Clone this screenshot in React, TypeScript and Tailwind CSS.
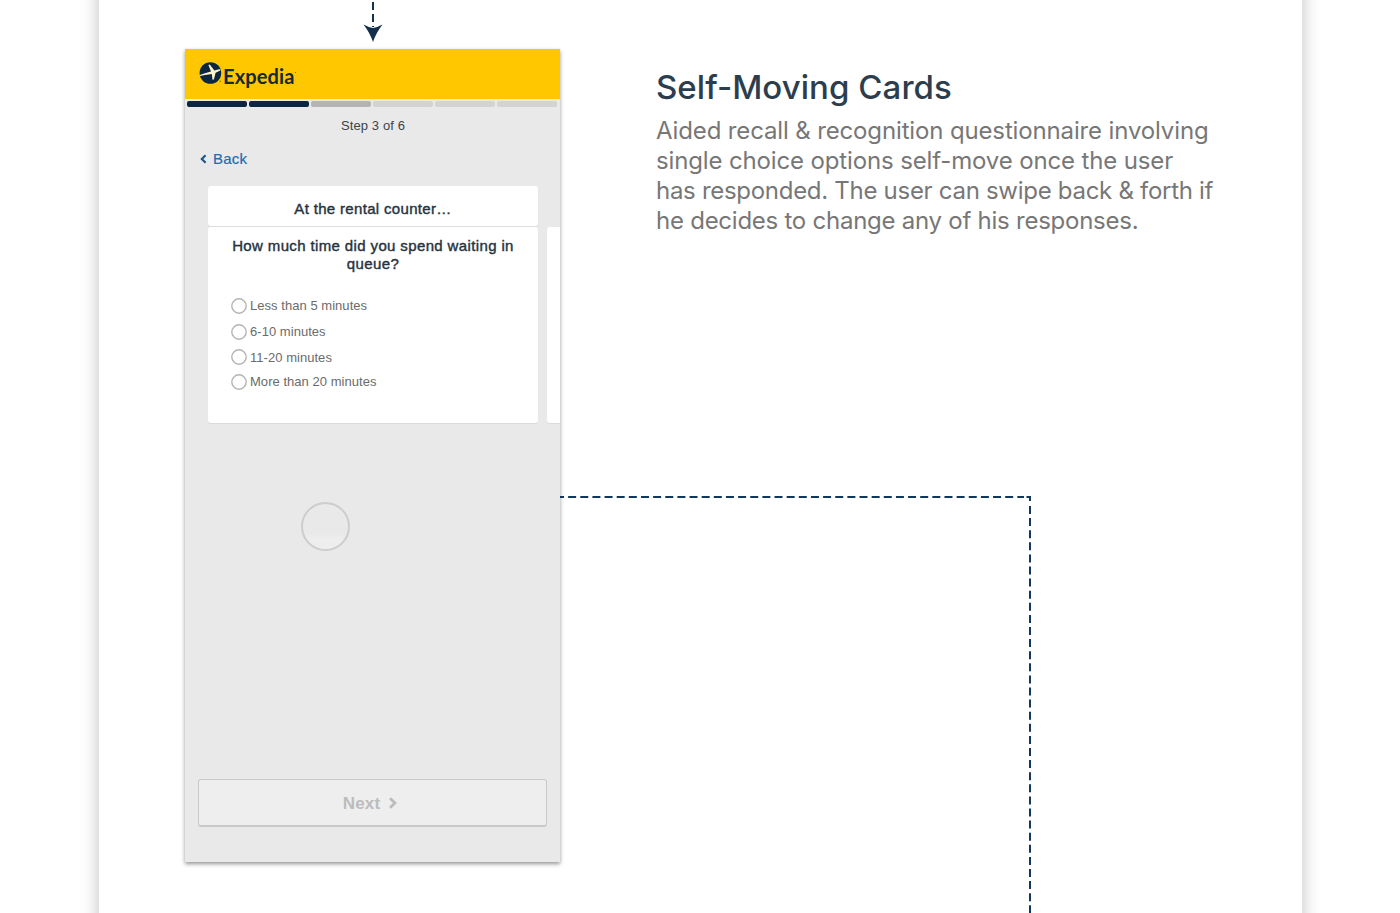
import React from 'react';

const STEPS = ['bg-[#0b2640]', 'bg-[#0b2640]', 'bg-[#b4b4b4]', 'bg-[#d3d3d3]', 'bg-[#d3d3d3]', 'bg-[#d3d3d3]'];

const OPTIONS = [
  { label: 'Less than 5 minutes', height: 'h-[26px]' },
  { label: '6-10 minutes', height: 'h-[26px]' },
  { label: '11-20 minutes', height: 'h-[25px]' },
  { label: 'More than 20 minutes', height: 'h-[24px]' },
];

const SUMMARY = [
  { text: 'Aided recall & recognition questionnaire involving', tracking: 'tracking-[-0.14px]' },
  { text: 'single choice options self-move once the user', tracking: 'tracking-[-0.14px]' },
  { text: 'has responded. The user can swipe back & forth if', tracking: 'tracking-[-0.29px]' },
  { text: 'he decides to change any of his responses.', tracking: 'tracking-[-0.25px]' },
];

function Logo() {
  return (
    <div className="flex items-start">
      <svg width="24" height="24" viewBox="0 0 24 24" className="shrink-0">
        <circle cx="11.4" cy="12" r="10.8" fill="#0b2640" />
        <path
          d="M0.8 13.9 L6 12.2 L12 10.6 L9.4 4 L10.7 3.5 L15.4 9.5 L20 8.3 C21.8 8 22 9.2 20.8 9.8 L16.6 11.8 L14.9 18.6 L13.5 18.8 L12.8 13 L6 14 L0.9 14.9 Z"
          fill="#fff3cc"
        />
        <circle cx="21.2" cy="20.3" r="0.7" fill="#7d6a15" />
      </svg>
      <span className="mt-[2.500px] font-['Lato'] text-[20px] leading-6 font-bold tracking-[0.15px] text-[#14293a]">Expedia</span>
      <span className="mt-[11px] size-px bg-[#7d6a15]" />
    </div>
  );
}

function Phone() {
  return (
    <section className="flex h-[813px] w-[375px] shrink-0 flex-col overflow-hidden bg-[#e9e9e9] font-['Liberation_Sans',sans-serif]">
      <header className="h-[50px] shrink-0 bg-[#ffc700] pt-[12px] pl-[14px]">
        <Logo />
      </header>
      <div className="mt-[2px] flex gap-[2px] pl-[2px]">
        {STEPS.map((color, i) => (
          <span key={i} className={`h-[6px] w-[60px] rounded-[2px] ${color}`} />
        ))}
      </div>
      <p className="mt-[10px] pl-px text-center text-[13px] leading-[18px] tracking-[0.1px] text-[#3a444c]">Step 3 of 6</p>
      <a className="mt-[14px] flex h-5 items-center pl-[14px] text-[15px] tracking-[0.2px] text-[#1f6cb0] [-webkit-text-stroke:0.2px_#1f6cb0]">
        <svg width="9" height="10" viewBox="0 0 9 10" className="mr-[5px]">
          <path d="M6.6 1.3 L2.8 5 L6.6 8.7" fill="none" stroke="#1d5488" strokeWidth="2.1" />
        </svg>
        Back
      </a>
      <div className="mt-[17px] flex w-[500px] items-end gap-[9px] pl-[23px]">
        <div className="flex w-[330px] flex-col gap-px text-[#26333e]">
          <h2 className="h-10 rounded-[3px] bg-white pt-[14px] text-center text-[15px] leading-[18px] tracking-[0.33px] shadow-[0_1px_1px_#dcdcdc] [-webkit-text-stroke:0.4px_#26333e]">
            At the rental counter…
          </h2>
          <div className="h-[196px] rounded-[3px] bg-white pt-[10px] shadow-[0_1px_1px_#d9d9d9]">
            <h3 className="text-center text-[15px] leading-[18px] tracking-[0.37px] [-webkit-text-stroke:0.4px_#26333e]">
              How much time did you spend waiting in
              <br />
              queue?
            </h3>
            <ul className="mt-[20px] pl-[23px]">
              {OPTIONS.map((o) => (
                <li key={o.label} className={`flex items-center gap-[3px] text-[13px] tracking-[0.04px] text-[#6b6b6b] ${o.height}`}>
                  <svg width="16" height="16" viewBox="0 0 16 16" className="-mt-px">
                    <circle cx="8" cy="8" r="7.2" fill="none" stroke="#b4b4b4" strokeWidth="1.4" />
                  </svg>
                  <span>{o.label}</span>
                </li>
              ))}
            </ul>
          </div>
        </div>
        <div className="h-[196px] w-[60px] rounded-[3px] bg-white shadow-[0_1px_1px_#d9d9d9]" />
      </div>
      <div className="mt-[79px] ml-[116px] size-[49px] rounded-full border-2 border-[#cdcdcd] bg-linear-to-b from-[#e9e9e9] from-65% to-[#eeeeee] to-80%" />
      <button className="mt-auto mb-[35px] ml-[13px] flex h-12 w-[349px] items-center justify-center rounded-[3px] border border-b-2 border-[#c9c9c9] bg-[#eeeeee] pt-px text-[17px] font-bold tracking-[0.15px] text-[#bcbcbc]">
        <span className="pt-px">Next</span>
        <svg width="10" height="12" viewBox="0 0 10 12" className="mr-[4px] ml-[8px]">
          <path d="M2 1.2 L7 6 L2 10.8" fill="none" stroke="#bcbcbc" strokeWidth="2.7" />
        </svg>
      </button>
    </section>
  );
}

export default function App() {
  return (
    <div className="flex h-[913px] w-[1400px] items-center overflow-hidden bg-white pl-[99px]">
      <main className="relative flex h-[993px] w-[1203px] shrink-0 items-start bg-white pt-[89px] pl-[86px] shadow-[0_0_17px_rgba(0,0,0,0.26)]">
        <div className="shadow-[0_2px_4px_rgba(0,0,0,0.42)]">
          <Phone />
        </div>
        <section className="mt-[18px] ml-[96px] font-['Inter',sans-serif] whitespace-nowrap">
          <h1 className="text-[33px] leading-[40px] font-medium tracking-[0.05px] text-[#2c3e4e]">Self-Moving Cards</h1>
          <p className="mt-[9px] text-[24px] leading-[30px] text-[#777777]">
            {SUMMARY.map((l) => (
              <span key={l.text} className={`block ${l.tracking}`}>
                {l.text}
              </span>
            ))}
          </p>
        </section>
        <svg className="pointer-events-none absolute top-[40px] left-0" width="1203" height="913" viewBox="99 0 1203 913" fill="none">
          <path d="M373 2 V27" stroke="#14304c" strokeWidth="2" strokeDasharray="8 4" />
          <path d="M363.5 24.5 Q369 27.5 373 28 Q377 27.5 382.5 24.5 Q376 33 373 42 Q370 33 363.5 24.5 Z" fill="#14304c" />
          <path d="M560 497 H1024" stroke="#12375c" strokeWidth="2" strokeDasharray="8 4.14" strokeDashoffset="4" />
          <path d="M1026.5 497 H1030 V501" stroke="#12375c" strokeWidth="2" />
          <path d="M1030 506 V913" stroke="#12375c" strokeWidth="2" strokeDasharray="8 4.1" />
        </svg>
      </main>
    </div>
  );
}
